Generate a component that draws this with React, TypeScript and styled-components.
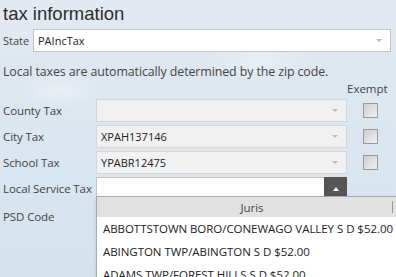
import styled, { createGlobalStyle } from 'styled-components';

const GlobalStyle = createGlobalStyle`
  html, body {
    margin: 0;
    padding: 0;
  }
  body {
    width: 396px;
    height: 277px;
    overflow: hidden;
    font-family: "Open Sans", "Noto Sans", sans-serif;
    color: #333;
  }
`

const Page = styled.div`
  position: relative;
  height: 277px;
  padding: 0 5px 0 3px;
  box-sizing: border-box;
  background:
    radial-gradient(ellipse 40px 20px at 60px 90px, rgba(255,255,255,0.35), transparent),
    radial-gradient(ellipse 50px 25px at 260px 60px, rgba(255,255,255,0.3), transparent),
    linear-gradient(180deg, #e2e9f1 0%, #dbe6f0 50%, #d4e3ee 100%);
  overflow: hidden;
`

const Title = styled.h1`
  margin: 0;
  padding-top: 2px;
  font-family: "Liberation Sans", Arial, sans-serif;
  font-weight: normal;
  font-size: 18.5px;
  line-height: 24px;
  color: #2e2e2e;
`

const StateRow = styled.div`
  display: flex;
  align-items: center;
  margin-top: 3px;
`

const StateLabel = styled.span`
  width: 30px;
  font-size: 11px;
  color: #444;
`

const Note = styled.p`
  margin: 11px 0 0;
  font-size: 12.4px;
  letter-spacing: -0.1px;
  color: #444;
  white-space: nowrap;
`

const TaxGrid = styled.div`
  display: grid;
  grid-template-columns: 93px 251px 1fr;
  row-gap: 3px;
  align-items: center;
`

const ExemptHead = styled.span`
  grid-column: 3;
  justify-self: start;
  font-size: 11.5px;
  color: #444;
  line-height: 15px;
  margin-top: 1px;
`

const Label = styled.span`
  font-size: 11.5px;
  letter-spacing: -0.1px;
  white-space: nowrap;
  color: #444;
`

const Select = styled.div<{ $disabled?: boolean; $grow?: boolean }>`
  position: relative;
  display: flex;
  align-items: center;
  height: 23px;
  box-sizing: border-box;
  flex: ${p => (p.$grow ? 1 : 'none')};
  padding-left: 4px;
  background: ${p => (p.$disabled ? '#f1f1f1' : '#fff')};
  border: 1px solid ${p => (p.$disabled ? '#d6d6d6' : '#c4c4c4')};
  font-size: 11px;
  color: #222;
`

const Caret = styled.span`
  margin-left: auto;
  margin-right: 8px;
  width: 0;
  height: 0;
  border-left: 3px solid transparent;
  border-right: 3px solid transparent;
  border-top: 3px solid #bbb;
`

const OpenButton = styled.span`
  margin-left: auto;
  align-self: stretch;
  width: 23px;
  margin-top: -1px;
  margin-bottom: -1px;
  margin-right: -1px;
  background: #555;
  display: flex;
  align-items: center;
  justify-content: center;
  &::after {
    content: '';
    border-left: 3.5px solid transparent;
    border-right: 3.5px solid transparent;
    border-bottom: 4px solid #fff;
  }
`

const CheckCell = styled.div`
  display: flex;
  justify-content: center;
  margin-left: 2px;
`

const Check = styled.span`
  width: 13px;
  height: 13px;
  border: 1px solid #9a9a9a;
  background: linear-gradient(135deg, #cfcfcf 0%, #efefef 100%);
  box-sizing: content-box;
`

const PsdLabel = styled(Label)`
  padding-top: 6px;
  grid-column: 1;
`

const Dropdown = styled.div`
  position: absolute;
  left: 96px;
  top: 196px;
  width: 310px;
  background: #fff;
  border: 1px solid #aaa;
  box-shadow: 0 2px 4px rgba(0,0,0,0.15);
`

const DropHead = styled.div`
  height: 20px;
  background: #e1e1e1;
  display: flex;
  align-items: center;
  justify-content: center;
  position: relative;
  font-size: 11.5px;
  color: #444;
  &::after {
    content: '';
    position: absolute;
    left: 295px;
    top: 4px;
    width: 1px;
    height: 12px;
    background: #999;
  }
`

const Option = styled.div`
  height: 23px;
  line-height: 23px;
  padding-left: 6px;
  white-space: nowrap;
  font-size: 11.5px;
  letter-spacing: -0.05px;
  color: #222;
`

const rows = [
  { label: 'County Tax', value: '' },
  { label: 'City Tax', value: 'XPAH137146' },
  { label: 'School Tax', value: 'YPABR12475' },
]

const options = [
  'ABBOTTSTOWN BORO/CONEWAGO VALLEY S D $52.00',
  'ABINGTON TWP/ABINGTON S D $52.00',
  'ADAMS TWP/FOREST HILLS S D $52.00',
]

export default function App() {
  return (
    <>
      <GlobalStyle />
      <Page>
        <Title>tax information</Title>
        <StateRow>
          <StateLabel>State</StateLabel>
          <Select $grow>
            PAIncTax
            <Caret />
          </Select>
        </StateRow>
        <Note>Local taxes are automatically determined by the zip code.</Note>
        <TaxGrid>
          <ExemptHead>Exempt</ExemptHead>
          {rows.map(r => (
            <>
              <Label key={r.label}>{r.label}</Label>
              <Select $disabled>
                {r.value}
                <Caret />
              </Select>
              <CheckCell>
                <Check />
              </CheckCell>
            </>
          ))}
          <Label>Local Service Tax</Label>
          <Select>
            <OpenButton />
          </Select>
          <span />
          <PsdLabel>PSD Code</PsdLabel>
        </TaxGrid>
        <Dropdown>
          <DropHead>Juris</DropHead>
          {options.map(o => (
            <Option key={o}>{o}</Option>
          ))}
        </Dropdown>
      </Page>
    </>
  )
}
